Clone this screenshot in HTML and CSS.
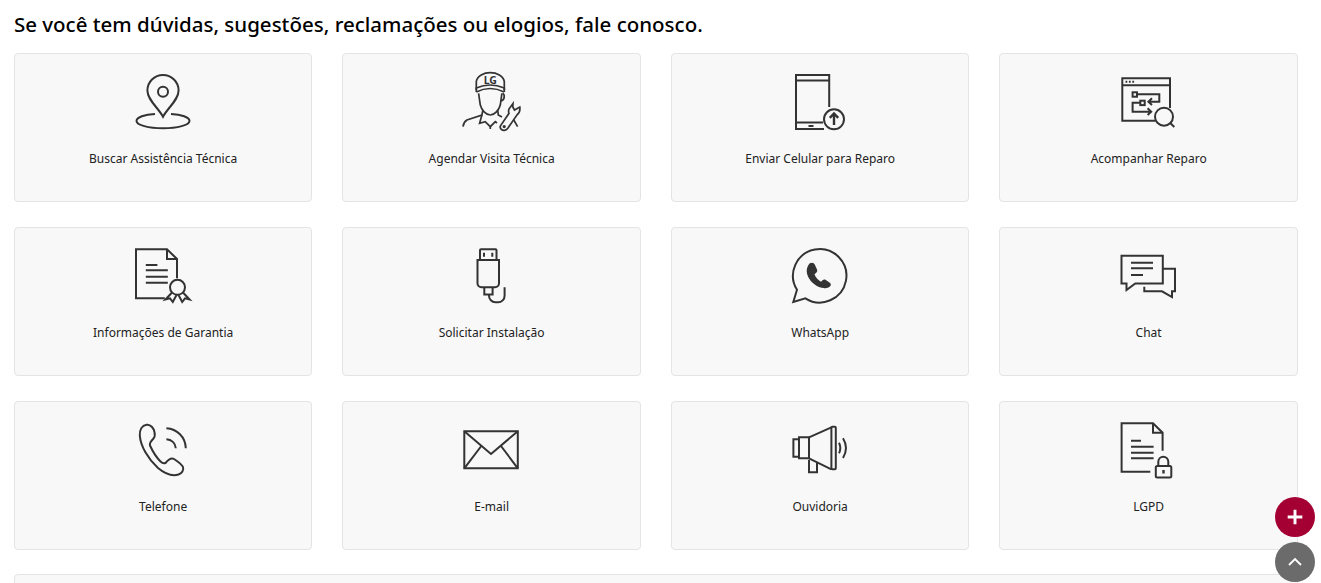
FILE: index.html
```html
<!DOCTYPE html>
<html lang="pt-BR">
    <head>
        <meta charset="utf-8" />
        <title>Fale conosco</title>
        <link rel="stylesheet" href="styles.css">
    </head>
    <body>
        <div id="page-content">
            <h2 class="title">Se você tem dúvidas, sugestões, reclamações ou elogios, fale conosco.</h2>

            <div class="cardGrid">
                <a class="card" href="#">
                    <svg class="ico" viewBox="0 0 64 64">
                        <path d="M32 48.700C27.500 40 16.400 32 16.400 22.600a15.600 15.600 0 0 1 31.200 0C47.600 32 36.500 40 32 48.700z"/>
                        <circle cx="32" cy="23.700" r="5"/>
                        <path d="M24 46C13.500 46.500 5.500 49.300 5.500 53c0 4 11.900 7.300 26.500 7.300s26.500-3.300 26.500-7.300c0-3.700-8-6.500-18.500-7"/>
                    </svg>
                    <span class="cardLabel">Buscar Assistência Técnica</span>
                </a>
                <a class="card" href="#">
                    <svg class="ico thin" viewBox="0 0 64 64">
                        <path d="M16.300 22V13.700C17 8 24 4.700 30.300 4.700S43.500 8 44.300 13.700V22"/>
                        <path d="M16.300 24Q30 17 44.300 24"/>
                        <path d="M16.300 24L16.300 20Q30 14 44.300 20L44.300 24"/>
                        <text class="capText" x="30.300" y="16">LG</text>
                        <path d="M18.600 25.300L20.300 37C21.500 42 26 47 30.300 47S39 42 40.300 37L41.900 25.300"/>
                        <path d="M42.500 25.500C45 26 45 32 41 33"/>
                        <path d="M22.900 42L21.900 47L6.900 52C4.500 53.500 3.300 56 3 58.700"/>
                        <path d="M21.900 47L19.600 55.300L25.200 53.700L30.300 58.700L35.300 53.700L37 55"/>
                        <path d="M30.300 58.700V61M37.700 42L38.300 47L42 49"/>
                        <path d="M49 41L53 35.500L52.800 39L54.500 42L59.800 39C60.300 42.500 59 45.500 56.900 47L47.800 60.300C46 62.800 42.800 62.800 41.300 61.300C40 60 40 58.500 40.600 57.600L49 45.300C48.400 43.800 48.400 42.500 49 41z"/>
                        <circle cx="44.200" cy="58.600" r="0.800"/>
                        <path d="M53.800 52L57.600 58.700"/>
                    </svg>
                    <span class="cardLabel">Agendar Visita Técnica</span>
                </a>
                <a class="card" href="#">
                    <svg class="ico" viewBox="0 0 64 64">
                        <path d="M41.200 39V7H8V61H36"/>
                        <path d="M8 12.500H41.200M8 54.500H35"/>
                        <path d="M20.500 58H25.500"/>
                        <circle cx="46" cy="51.300" r="10"/>
                        <path class="heavy" d="M46 57V46M41.800 49.800L46 45.500L50.200 49.800"/>
                    </svg>
                    <span class="cardLabel">Enviar Celular para Reparo</span>
                </a>
                <a class="card" href="#">
                    <svg class="ico" viewBox="0 0 64 64">
                        <path d="M38 52.700H5.300V10.300H53V40"/>
                        <path d="M5.300 17.300H53"/>
                        <path d="M8.500 13.800H10.300M11.900 13.800H13.700M15.300 13.800H17.100"/>
                        <rect x="15.600" y="24.300" width="4.400" height="4.400"/>
                        <rect x="23.300" y="32.700" width="4.400" height="4.400"/>
                        <path d="M20 26.300H42.300V33.700H31.600M35 30.300L31.400 33.700L35 37.100"/>
                        <path d="M23.300 34.700H15.600V43.700H34M30.600 40.300L34.200 43.700L30.600 47.100"/>
                        <circle cx="47" cy="48.700" r="9"/>
                        <path d="M53.200 55L57.300 59"/>
                    </svg>
                    <span class="cardLabel">Acompanhar Reparo</span>
                </a>

                <a class="card" href="#">
                    <svg class="ico" viewBox="0 0 64 64">
                        <path d="M33.800 56.300H5V7.300H36L46 17V36.300"/>
                        <path d="M36 7.300V17H46"/>
                        <path d="M14.800 23H26.400M14.800 28.300H36.800M14.800 34.700H36.800M14.800 40.700H36.800"/>
                        <circle cx="46.500" cy="45.300" r="7.500"/>
                        <path d="M41 50.500L34.500 57.500L39 56.300L41.800 60L45.500 53"/>
                        <path d="M52 50.500L58.500 57.500L54 56.300L51.200 60L47.500 53"/>
                    </svg>
                    <span class="cardLabel">Informações de Garantia</span>
                </a>
                <a class="card" href="#">
                    <svg class="ico" viewBox="0 0 64 64">
                        <path d="M20 18V8.300A1 1 0 0 1 21 7.300H35.500A1 1 0 0 1 36.500 8.300V18"/>
                        <path d="M17.500 18H39V41.300A4 4 0 0 1 35 45.300H21.500A4 4 0 0 1 17.500 41.300z"/>
                        <path d="M24 10.800V14.700M32.300 10.800V14.700"/>
                        <path d="M24.300 45.300V52.500H32.600V45.300"/>
                        <path d="M29 52.500V53.500A6.500 6.500 0 0 0 35.500 60.300H37.800A6.500 6.500 0 0 0 44.600 53.500V45.300"/>
                    </svg>
                    <span class="cardLabel">Solicitar Instalação</span>
                </a>
                <a class="card" href="#">
                    <svg class="ico" viewBox="0 0 64 64">
                        <path d="M9 47.800L5.300 60L17.400 56.300A26.700 26.700 0 1 0 9 47.800z"/>
                        <path class="solid" d="M21.500 21.500c2-1.500 4.500-1 5.500 1.500l2 4.500c.6 1.500 0 2.700-1 3.500l-1.500 1.200c1 3 3.500 6 6.500 7.500l1.500-1.400c1-.9 2.200-1.100 3.300-.3l3.700 2.500c1.700 1.200 1.800 2.800.4 4-1.600 1.400-4 2-6.200 1.500C25 45 16 33 19.500 25c.4-1.300 1-2.500 2-3.500z"/>
                    </svg>
                    <span class="cardLabel">WhatsApp</span>
                </a>
                <a class="card" href="#">
                    <svg class="ico" viewBox="0 0 64 64">
                        <path d="M4.500 13.700H45.800V41.500H18.300L9.500 48V41.500H4.500z"/>
                        <path d="M14 20.700H36M14 26.300H36M14 33H26"/>
                        <path d="M45.800 26.800H58V49.300H55V55L45 49.300H27.300V44.700"/>
                    </svg>
                    <span class="cardLabel">Chat</span>
                </a>

                <a class="card" href="#">
                    <svg class="ico" viewBox="0 0 64 64">
                        <path d="M15.500 8.700C11 9.500 8.500 14 8.800 19.500C9.500 30 17 43 27 52C33 57 41 60.500 47.500 58.500C51 57.500 53 54 52 51C51.300 49 46 45 43 43C40.500 41.500 37 44 34.500 47C32.500 48 31 47 29.500 45.500C25 41 21.500 35 19 29.500C18 27 20 25 22.500 22.500C24 21 24 18.500 23.500 16C23 13 20 8 15.500 8.700z"/>
                        <path d="M35.400 12.300C46 13 54.500 21 54.800 32.300"/>
                        <path d="M35.400 23.300C40.500 23.500 44.500 27 44.800 32.300"/>
                    </svg>
                    <span class="cardLabel">Telefone</span>
                </a>
                <a class="card" href="#">
                    <svg class="ico" viewBox="0 0 64 64">
                        <path d="M4.300 15.200H57.800V52.300H4.300z"/>
                        <path d="M4.300 15.200L31 38L57.800 15.200"/>
                        <path d="M4.300 52.300L21.300 30M57.800 52.300L41 30"/>
                    </svg>
                    <span class="cardLabel">E-mail</span>
                </a>
                <a class="card" href="#">
                    <svg class="ico" viewBox="0 0 64 64">
                        <path d="M11 23.300H5.400V40.700H11"/>
                        <path d="M11 21.300H21V42.300H11z"/>
                        <path d="M21 21.300L43.400 11.300M21 42.300L43.400 53.300"/>
                        <rect x="43.400" y="10.700" width="4.400" height="42.600" rx="1"/>
                        <path d="M21 44V56.200H29V47"/>
                        <path d="M51 26.700Q53.600 32 51 37.300"/>
                        <path d="M55 22.300Q61 32 55 42"/>
                    </svg>
                    <span class="cardLabel">Ouvidoria</span>
                </a>
                <a class="card" href="#">
                    <svg class="ico" viewBox="0 0 64 64">
                        <path d="M33.300 55.700H4.600V7.300H36L45.600 16.700V34.700"/>
                        <path d="M36 7.300V16.700H45.600"/>
                        <path d="M14 24.700H24M14 30.700H36.600M14 36.700H36.600M14 42.300H36.600"/>
                        <rect x="38.800" y="50" width="15.500" height="11.500" rx="1.500"/>
                        <path d="M41.300 50V45.700A5 5 0 0 1 51.300 45.700V50"/>
                        <path class="heavy" d="M46.500 54V57.500"/>
                    </svg>
                    <span class="cardLabel">LGPD</span>
                </a>
            </div>

            <div class="infoPanel"></div>

            <div class="floatBtns">
                <a class="roundBtn plusBtn" href="#">
                    <svg viewBox="0 0 16 16"><path d="M8 1.500V14.500M1.500 8H14.500"/></svg>
                </a>
                <a class="roundBtn topBtn" href="#">
                    <svg viewBox="0 0 16 16"><path d="M2 11L8 5L14 11"/></svg>
                </a>
            </div>
        </div>
    </body>
</html>
```

FILE: styles.css
```css
/* page */
html, body {
    margin: 0;
    height: 100%;
    background: #fff;
}
body {
    font-family: "Noto Sans", Arial, sans-serif;
    color: #000;
}
#page-content {
    position: relative;
    height: 583px;
    overflow: hidden;
    padding: 0 23.1px 0 13.9px;
    box-sizing: border-box;
}

/* heading */
.title {
    margin: 0;
    height: 53px;
    box-sizing: border-box;
    padding-top: 9px;
    font-size: 20.5px;
    line-height: 30px;
    font-weight: 500;
    white-space: nowrap;
}

/* cards */
.cardGrid {
    display: grid;
    grid-template-columns: repeat(4, 1fr);
    grid-auto-rows: 149px;
    gap: 25px 30px;
}
.card {
    display: flex;
    flex-direction: column;
    align-items: center;
    box-sizing: border-box;
    padding-top: 14px;
    background: #f8f8f8;
    border: 1px solid #e4e4e4;
    border-radius: 4px;
    color: #222;
    text-decoration: none;
}
.cardLabel {
    margin-top: 18px;
    font-size: 12px;
    line-height: 18px;
}

/* line icons */
.ico {
    display: block;
    width: 64px;
    height: 64px;
    flex: none;
    overflow: visible;
    fill: none;
    stroke: #333;
    stroke-width: 2;
}
.ico.thin {
    stroke-width: 1.7;
}
.ico .heavy {
    stroke-width: 2.4;
}
.ico .solid {
    fill: #333;
    stroke: none;
}
.capText {
    fill: #333;
    stroke: none;
    font-size: 10.5px;
    font-weight: 700;
    text-anchor: middle;
}

/* panel cut off by the window */
.infoPanel {
    margin-top: 24px;
    height: 60px;
    background: #f8f8f8;
    border: 1px solid #e4e4e4;
    border-radius: 4px;
}

/* floating buttons */
.floatBtns {
    position: absolute;
    left: 1275px;
    top: 497px;
    display: flex;
    flex-direction: column;
    gap: 5px;
}
.roundBtn {
    display: flex;
    align-items: center;
    justify-content: center;
    width: 40px;
    height: 40px;
    border-radius: 50%;
}
.roundBtn svg {
    width: 18px;
    height: 18px;
    fill: none;
    stroke: #fff;
    stroke-width: 2.6;
}
.plusBtn {
    background: #a50034;
}
.topBtn {
    background: #6b6b6b;
}
.topBtn svg {
    width: 16px;
    height: 16px;
    stroke-width: 1.8;
}
```
